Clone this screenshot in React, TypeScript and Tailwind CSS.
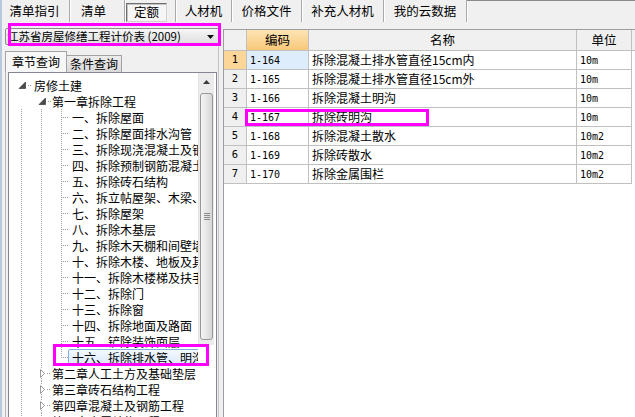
import React from 'react';

const cjk = "font-['Noto_Sans_CJK_SC','Noto_Sans_CJK_JP',sans-serif]";
const mono = "font-['DejaVu_Sans_Mono','Liberation_Mono',monospace]";

const topTabs = [
  { label: '清单指引', w: 'w-[70px]' },
  { label: '清单', w: 'w-[55px] pr-[7px]' },
  { label: '定额', w: 'w-[51px]', pressed: true },
  { label: '人材机', w: 'w-[56px]' },
  { label: '价格文件', w: 'w-[70px]' },
  { label: '补充人材机', w: 'w-[82px]' },
  { label: '我的云数据', w: 'w-[83px]' },
];

type Cell = 'none' | 'v' | 'tee' | 'ell' | 'open' | 'closed';

const treeRows: { cells: Cell[]; label: string; selected?: boolean }[] = [
  { cells: ['open'], label: '房修土建' },
  { cells: ['none', 'open'], label: '第一章拆除工程' },
  { cells: ['v', 'v', 'tee'], label: '一、拆除屋面' },
  { cells: ['v', 'v', 'tee'], label: '二、拆除屋面排水沟管' },
  { cells: ['v', 'v', 'tee'], label: '三、拆除现浇混凝土及钢筋混凝土' },
  { cells: ['v', 'v', 'tee'], label: '四、拆除预制钢筋混凝土构件' },
  { cells: ['v', 'v', 'tee'], label: '五、拆除砖石结构' },
  { cells: ['v', 'v', 'tee'], label: '六、拆立帖屋架、木梁、木柱' },
  { cells: ['v', 'v', 'tee'], label: '七、拆除屋架' },
  { cells: ['v', 'v', 'tee'], label: '八、拆除木基层' },
  { cells: ['v', 'v', 'tee'], label: '九、拆除木天棚和间壁墙' },
  { cells: ['v', 'v', 'tee'], label: '十、拆除木楼、地板及其他' },
  { cells: ['v', 'v', 'tee'], label: '十一、拆除木楼梯及扶手' },
  { cells: ['v', 'v', 'tee'], label: '十二、拆除门' },
  { cells: ['v', 'v', 'tee'], label: '十三、拆除窗' },
  { cells: ['v', 'v', 'tee'], label: '十四、拆除地面及路面' },
  { cells: ['v', 'v', 'tee'], label: '十五、铲除装饰面层' },
  { cells: ['v', 'v', 'ell'], label: '十六、拆除排水管、明沟', selected: true },
  { cells: ['v', 'closed'], label: '第二章人工土方及基础垫层' },
  { cells: ['v', 'closed'], label: '第三章砖石结构工程' },
  { cells: ['v', 'closed'], label: '第四章混凝土及钢筋工程' },
  { cells: ['v', 'closed'], label: '第五章金属结构工程' },
];

const gridRows = [
  { no: 1, code: '1-164', name: '拆除混凝土排水管直径15cm内', unit: '10m' },
  { no: 2, code: '1-165', name: '拆除混凝土排水管直径15cm外', unit: '10m' },
  { no: 3, code: '1-166', name: '拆除混凝土明沟', unit: '10m' },
  { no: 4, code: '1-167', name: '拆除砖明沟', unit: '10m' },
  { no: 5, code: '1-168', name: '拆除混凝土散水', unit: '10m2' },
  { no: 6, code: '1-169', name: '拆除砖散水', unit: '10m2' },
  { no: 7, code: '1-170', name: '拆除金属围栏', unit: '10m2' },
];

const dot = { stroke: '#a0a0a0', strokeWidth: 1, strokeDasharray: '1 1' };

function TreeGlyph({ kind }: { kind: Cell }) {
  return (
    <svg width="20" height="16" viewBox="0 0 20 16" className="shrink-0" shapeRendering="crispEdges">
      {(kind === 'v' || kind === 'tee') && <line x1="10.5" y1="0" x2="10.5" y2="16" {...dot} />}
      {kind === 'ell' && <line x1="10.5" y1="0" x2="10.5" y2="9" {...dot} />}
      {(kind === 'tee' || kind === 'ell') && <line x1="12" y1="8.5" x2="18" y2="8.5" {...dot} />}
      {kind === 'open' && (
        <>
          <polygon points="14.5,5 14.5,11.5 8,11.5" fill="#4a4a4a" stroke="#262626" strokeWidth="0.6" shapeRendering="auto" />
          <line x1="17" y1="8.5" x2="20" y2="8.5" {...dot} />
        </>
      )}
      {kind === 'closed' && (
        <>
          <line x1="10.5" y1="0" x2="10.5" y2="4" {...dot} />
          <line x1="10.5" y1="13" x2="10.5" y2="16" {...dot} />
          <polygon points="9.5,4.5 13.5,8.5 9.5,12.5" fill="#ffffff" stroke="#9a9a9a" strokeWidth="1" shapeRendering="auto" />
          <line x1="16" y1="8.5" x2="20" y2="8.5" {...dot} />
        </>
      )}
    </svg>
  );
}

function TreeRow({ cells, label, selected }: { cells: Cell[]; label: string; selected?: boolean }) {
  const level = cells.length - 1;
  let labelCls = 'ml-[3px]';
  if (level === 1) labelCls = 'ml-[1px]';
  if (level === 2)
    labelCls = selected
      ? '-ml-[3px] pl-[3px] flex-1 h-[17px] border border-[#84acdd] rounded-[2px] bg-gradient-to-b from-[#f4f9fe] to-[#d9e9fb]'
      : '-ml-[3px] pl-[3px] border border-transparent';
  return (
    <div className="h-[16px] flex items-center whitespace-nowrap">
      {cells.map((c, i) => (
        <TreeGlyph key={i} kind={c} />
      ))}
      <span className={`text-[12px] leading-[15px] text-black ${labelCls}`}>{label}</span>
    </div>
  );
}

function Scrollbar() {
  return (
    <div className="h-[272px] w-[16px] bg-[#ebebeb] border-l border-[#e2e2e2] flex flex-col items-stretch">
      <div className="h-[17px] flex items-center justify-center">
        <svg width="7" height="4" viewBox="0 0 7 4">
          <polygon points="0,4 3.5,0 7,4" fill="#3c3c3c" />
        </svg>
      </div>
      <div className="mt-[3px] mx-[1px] h-[247px] rounded-[3px] border border-[#979797] bg-gradient-to-r from-[#f5f5f5] to-[#d6d6d6] flex flex-col items-center justify-center gap-[1px]">
        <div className="w-[6px] h-px bg-[#8b8b8b]" />
        <div className="w-[6px] h-px bg-[#8b8b8b]" />
        <div className="w-[6px] h-px bg-[#8b8b8b]" />
        <div className="w-[6px] h-px bg-[#8b8b8b]" />
      </div>
    </div>
  );
}

export default function App() {
  return (
    <div
      className={`relative w-[635px] h-[417px] overflow-hidden bg-[#f0f0f0] shadow-[inset_2px_0_0_#b6c9e0] flex flex-col ${cjk}`}
    >
      {/* top tab strip */}
      <div className="h-[23px] flex shrink-0">
        {topTabs.map((t) => (
          <div
            key={t.label}
            className={`${t.w} h-[22px] flex items-center justify-center text-[12.5px] text-black border-r border-[#a9a9a9] shadow-[1px_0_0_#ffffff] shrink-0`}
          >
            {t.pressed ? (
              <div className="w-[41px] h-[19px] mt-[3px] -ml-[7px] flex items-center justify-center border border-t-[#6e6e6e] border-l-[#6e6e6e] border-r-[#d2d2d2] border-b-[#d2d2d2] bg-[#f6f6f6] shadow-[inset_1px_1px_0_#c4c4c4]">
                定额
              </div>
            ) : (
              t.label
            )}
          </div>
        ))}
        <div className="flex-1 border-t border-[#8a8a8a]" />
      </div>

      <div className="flex-1 flex min-h-0">
        {/* left panel */}
        <div className="w-[217px] shrink-0 flex flex-col min-w-0">
          <div className="pt-[5px] pl-[5px] h-[22px]">
            <div className="w-[215px] h-[17px] border border-[#8e8f8f] rounded-[2px] bg-gradient-to-b from-[#f7f7f7] to-[#dedede] flex items-center overflow-hidden pr-[4px]">
              <span className="pl-[1px] flex-1 text-[11.5px] leading-[15px] whitespace-nowrap text-black">
                江苏省房屋修缮工程计价表 (2009)
              </span>
              <svg width="7" height="4" viewBox="0 0 7 4" className="mr-[1px]">
                <polygon points="0,0 7,0 3.5,4" fill="#111111" />
              </svg>
            </div>
          </div>
          <div className="mt-[6px] ml-[5px] h-[21px] flex items-end shrink-0">
            <div className="w-[62px] h-[21px] border border-b-0 border-[#a3a3a3] bg-[#f7f7f7] flex items-center justify-center text-[12px] text-black relative z-10">
              章节查询
            </div>
            <div className="w-[56px] h-[17px] -ml-px border border-b-0 border-[#a3a3a3] bg-gradient-to-b from-[#ededed] to-[#dadada] flex items-center justify-center text-[12px] text-black">
              条件查询
            </div>
          </div>
          <div className="flex-1 min-h-0 min-w-0 ml-[5px] border-l border-[#b9b9b9] pl-[2px] flex overflow-hidden">
            <div className="flex-1 min-w-0 border border-b-0 border-[#828790] bg-white flex min-h-0 overflow-hidden">
              <div className="flex-1 min-w-0 overflow-hidden pt-[4px] pl-[2px]">
                {treeRows.map((r) => (
                  <TreeRow key={r.label} cells={r.cells} label={r.label} selected={r.selected} />
                ))}
              </div>
              <div className="w-[18px] shrink-0 pr-[2px] bg-white">
                <Scrollbar />
              </div>
            </div>
          </div>
        </div>

        {/* splitter */}
        <div className="w-[6px] shrink-0 flex">
          <div className="ml-[1px] w-px bg-[#c4c4c4]" />
        </div>

        {/* grid */}
        <div className="flex-1 pt-[6px] flex flex-col min-w-0">
          <div className="flex-1 bg-white border-l border-t border-[#9d9d9d] flex flex-col">
            <div className="h-[21px] flex border-b border-[#c0c0c0] text-[12.5px] text-black shrink-0">
              <div className="w-[23px] border-r border-[#c0c0c0] bg-[#f0f0f0]" />
              <div className="w-[62px] border-r border-[#c0c0c0] bg-gradient-to-b from-[#fde4b4] to-[#f8c878] flex items-center justify-center">
                编码
              </div>
              <div className="w-[268px] border-r border-[#c0c0c0] bg-[#f0f0f0] flex items-center justify-center">
                名称
              </div>
              <div className="w-[55px] border-r border-[#c0c0c0] bg-[#f0f0f0] flex items-center justify-center">
                单位
              </div>
              <div className="flex-1 bg-[#f0f0f0]" />
            </div>
            {gridRows.map((r) => (
              <div key={r.no} className="h-[19px] flex shrink-0 text-black">
                <div
                  className={`w-[23px] border-r border-b border-[#c0c0c0] flex items-center justify-center text-[10.5px] ${mono} ${
                    r.no === 1 ? 'bg-[#fcd699]' : 'bg-[#f0f0f0]'
                  }`}
                >
                  {r.no}
                </div>
                <div
                  className={`w-[62px] border-r border-b border-[#c0c0c0] flex items-center pl-[3px] text-[10px] ${mono} ${
                    r.no === 1 ? 'bg-[#ddedfc]' : ''
                  }`}
                >
                  {r.code}
                </div>
                <div className="w-[268px] border-r border-b border-[#c0c0c0] flex items-center pl-[3px] text-[12px] whitespace-nowrap">
                  {r.name}
                </div>
                <div className={`w-[55px] border-r border-b border-[#c0c0c0] flex items-center pl-[3px] text-[10px] ${mono}`}>
                  {r.unit}
                </div>
                <div className="flex-1" />
              </div>
            ))}
          </div>
        </div>
      </div>

      {/* magenta annotation boxes */}
      <div className="absolute left-[8px] top-[23px] w-[213px] h-[23px] border-[3px] border-[#ff00ff] pointer-events-none" />
      <div className="absolute left-[53px] top-[344px] w-[156px] h-[22px] border-[3px] border-[#ff00ff] pointer-events-none" />
      <div className="absolute left-[245px] top-[109px] w-[184px] h-[17px] border-[3px] border-[#ff00ff] pointer-events-none" />
    </div>
  );
}
